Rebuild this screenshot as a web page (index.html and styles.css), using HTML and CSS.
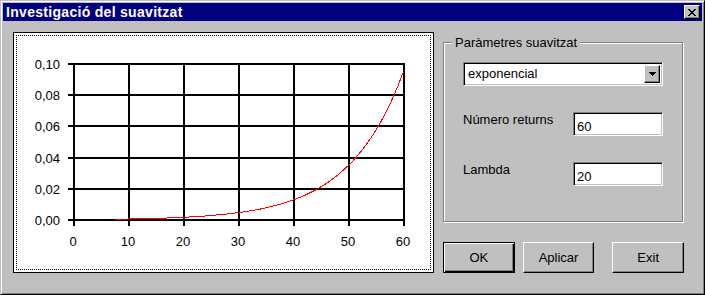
FILE: index.html
```html
<!DOCTYPE html>
<html lang="ca">
<head>
  <meta charset="UTF-8">
  <title>Investigació del suavitzat</title>
  <link rel="stylesheet" href="styles.css">
</head>
<body>

<div class="window">
  <div class="titlebar">
    <span class="title">Investigació del suavitzat</span>
    <button class="close" type="button">
      <svg width="8" height="7" viewBox="0 0 8 7" shape-rendering="crispEdges">
        <path d="M0 0h2v1h-2zM6 0h2v1h-2zM1 1h2v1h-2zM5 1h2v1h-2zM2 2h4v1h-4zM3 3h2v1h-2zM2 4h4v1h-4zM1 5h2v1h-2zM5 5h2v1h-2zM0 6h2v1h-2zM6 6h2v1h-2z" fill="#000"/>
      </svg>
    </button>
  </div>

  <div class="content">
    <div class="chart">
      <div class="plot">
        <svg class="graph" width="413" height="233" viewBox="17 36 413 233">
          <g fill="#000" shape-rendering="crispEdges">
            <!-- linies horitzontals -->
            <rect x="68" y="63" width="337" height="2"/>
            <rect x="68" y="94" width="337" height="2"/>
            <rect x="68" y="125" width="337" height="2"/>
            <rect x="68" y="157" width="337" height="2"/>
            <rect x="68" y="188" width="337" height="2"/>
            <rect x="68" y="219" width="337" height="2"/>
            <!-- linies verticals -->
            <rect x="73" y="63" width="2" height="163"/>
            <rect x="128" y="63" width="2" height="163"/>
            <rect x="183" y="63" width="2" height="163"/>
            <rect x="238" y="63" width="2" height="163"/>
            <rect x="293" y="63" width="2" height="163"/>
            <rect x="348" y="63" width="2" height="163"/>
            <rect x="403" y="63" width="2" height="163"/>
          </g>
          <g class="ylabels" text-anchor="end">
            <text x="60" y="68.7">0,10</text>
            <text x="60" y="99.7">0,08</text>
            <text x="60" y="130.7">0,06</text>
            <text x="60" y="162.7">0,04</text>
            <text x="60" y="193.7">0,02</text>
            <text x="60" y="224.7">0,00</text>
          </g>
          <g class="xlabels" text-anchor="middle">
            <text x="73" y="245.5">0</text>
            <text x="128" y="245.5">10</text>
            <text x="183" y="245.5">20</text>
            <text x="238" y="245.5">30</text>
            <text x="293" y="245.5">40</text>
            <text x="348" y="245.5">50</text>
            <text x="403" y="245.5">60</text>
          </g>
          <polyline class="curve" shape-rendering="crispEdges"
            points="114.75,219.2 128.5,219 139.5,218.8 150.5,218.5 161.5,218.2 172.5,217.8 183.5,217.3 194.5,216.7 205.5,216 216.5,215 227.5,214 238.5,212.6 249.5,211 260.5,209 271.5,206.5 282.5,203.6 293.5,199.9 304.5,195.5 315.5,190 326.5,183.4 337.5,175.3 348.5,165.4 354,159.7 359.5,153.3 365,146.3 370.5,138.6 376,130 381.5,120.6 387,110.1 392.5,98.5 398,85.8 403.5,71.6"/>
        </svg>
      </div>
    </div>

    <div class="side">
      <div class="group">
        <span class="group-caption">Paràmetres suavitzat</span>

        <div class="combo">
          <span class="combo-value">exponencial</span>
          <span class="combo-btn">
            <svg width="7" height="4" viewBox="0 0 7 4" shape-rendering="crispEdges">
              <path d="M0 0h7v1h-7zM1 1h5v1h-5zM2 2h3v1h-3zM3 3h1v1h-1z" fill="#000"/>
            </svg>
          </span>
        </div>

        <div class="field">
          <label for="returns">Número returns</label>
          <input type="text" id="returns" value="60">
        </div>

        <div class="field">
          <label for="lambda">Lambda</label>
          <input type="text" id="lambda" value="20">
        </div>
      </div>

      <div class="buttons">
        <button type="button" class="btn btn-default">OK</button>
        <button type="button" class="btn">Aplicar</button>
        <button type="button" class="btn btn-exit">Exit</button>
      </div>
    </div>
  </div>
</div>

</body>
</html>
```

FILE: styles.css
```css
* {
  box-sizing: border-box;
}
body {
  margin: 0;
  padding: 0;
  font-family: "Liberation Sans", Arial, sans-serif;
  font-size: 13px;
  color: #000;
  background: #c0c0c0;
}
.window {
  width: 705px;
  height: 295px;
  background: #c0c0c0;
  border: 1px solid;
  border-color: #c0c0c0 #000 #000 #c0c0c0;
  box-shadow: inset 1px 1px #fff, inset -1px -1px #808080;
  padding: 2px;
}

/* barra de titol */
.titlebar {
  height: 18px;
  background: #000080;
  display: flex;
  align-items: center;
  justify-content: space-between;
  padding: 0 2px 0 3px;
}
.title {
  color: #fff;
  font-weight: bold;
  font-size: 14px;
  letter-spacing: 0.3px;
  line-height: 18px;
}
.close {
  width: 16px;
  height: 14px;
  padding: 0;
  background: #c0c0c0;
  border: 1px solid;
  border-color: #fff #000 #000 #fff;
  box-shadow: inset -1px -1px #808080;
  display: flex;
  align-items: center;
  justify-content: center;
}
.close svg {
  display: block;
}

.content {
  display: flex;
  padding: 11px 0 0 10px;
}

/* grafic */
.chart {
  width: 421px;
  height: 241px;
  background: #fff;
  border: 1px solid #000;
  padding: 2px;
}
.plot {
  width: 415px;
  height: 235px;
  border: 1px dotted #000;
}
.graph {
  display: block;
}
.graph text {
  font-family: "Liberation Sans", Arial, sans-serif;
  font-size: 13px;
  fill: #000;
}
.curve {
  fill: none;
  stroke: #ff0000;
  stroke-width: 1;
}

/* panell dret */
.side {
  width: 241px;
  margin-left: 9px;
}
.group {
  position: relative;
  width: 240px;
  height: 180px;
  margin-top: 10px;
  border: 1px solid #808080;
  box-shadow: 1px 1px 0 #fff, inset 1px 1px 0 #fff;
  padding: 19px 0 0 19px;
}
.group-caption {
  position: absolute;
  top: -8px;
  left: 8px;
  padding: 0 3px;
  line-height: 15px;
  background: #c0c0c0;
}

.combo {
  width: 200px;
  height: 24px;
  background: #fff;
  border: 1px solid;
  border-color: #808080 #fff #fff #808080;
  box-shadow: inset 1px 1px #000, inset -1px -1px #c0c0c0;
  padding: 2px;
  display: flex;
  align-items: center;
  justify-content: space-between;
}
.combo-value {
  padding-left: 2px;
  line-height: 18px;
}
.combo-btn {
  width: 16px;
  height: 18px;
  background: #c0c0c0;
  border: 1px solid;
  border-color: #fff #000 #000 #fff;
  box-shadow: inset -1px -1px #808080;
  display: flex;
  align-items: center;
  justify-content: center;
}
.combo-btn svg {
  display: block;
}

.field {
  display: flex;
  align-items: flex-start;
  margin-top: 26px;
}
.field label {
  width: 110px;
  line-height: 15px;
}
.field input {
  width: 90px;
  height: 24px;
  margin: 0;
  background: #fff;
  border: 1px solid;
  border-color: #808080 #fff #fff #808080;
  box-shadow: inset 1px 1px #000, inset -1px -1px #c0c0c0;
  padding: 5px 3px 0;
  font-family: "Liberation Sans", Arial, sans-serif;
  font-size: 13px;
  color: #000;
  outline: none;
}

/* botons */
.buttons {
  display: flex;
  margin-top: 20px;
}
.btn {
  width: 72px;
  height: 31px;
  padding: 0;
  margin-right: 8px;
  background: #c0c0c0;
  border: 1px solid;
  border-color: #fff #000 #000 #fff;
  box-shadow: inset -1px -1px #808080;
  font-family: "Liberation Sans", Arial, sans-serif;
  font-size: 13px;
  color: #000;
}
.btn-default {
  border-color: #000;
  box-shadow: inset 1px 1px #fff, inset -1px -1px #000, inset -2px -2px #808080;
}
.btn-exit {
  margin-left: 10px;
  margin-right: 0;
}
```
